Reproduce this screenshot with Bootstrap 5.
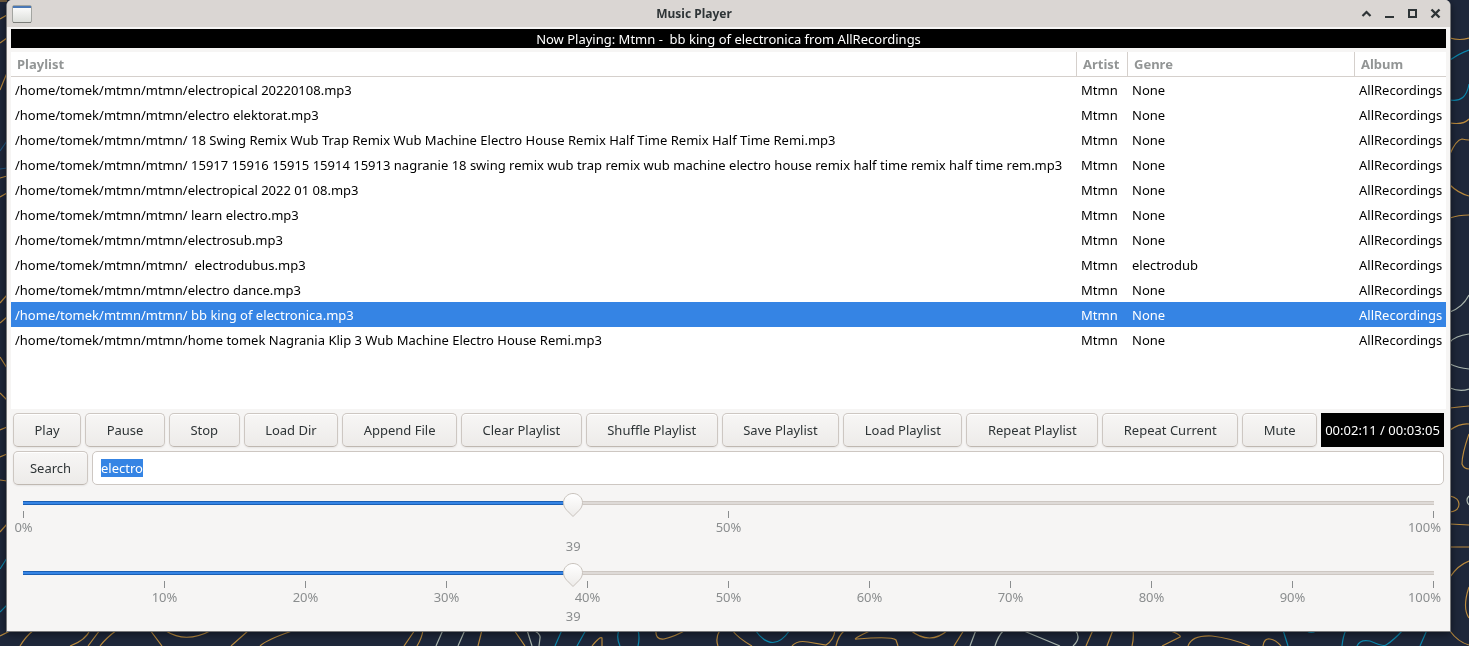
<!DOCTYPE html>
<html lang="en">
<head>
<meta charset="utf-8">
<meta name="viewport" content="width=device-width, initial-scale=1">
<title>Music Player</title>
<link href="https://cdn.jsdelivr.net/npm/bootstrap@5.3.0/dist/css/bootstrap.min.css" rel="stylesheet">
<style>
  body { background: #1e273a; font-family: "Noto Sans", sans-serif; font-size: 13px; line-height: 19px; color: #000; padding: 0 18px 14px 6px; }
  .wallpaper { position: fixed; top: 0; left: 0; z-index: -1; fill: none; stroke-width: 1.2; }
  .gold { stroke: #b98a3e; } .cyan { stroke: #0b87ad; } .mist { stroke: #a9b5ad; } .dusk { stroke: #1f5680; }
  .app-window { background: #f6f5f4; border: 1px solid #77787a; border-top: 0; border-radius: 6px 6px 0 0; box-shadow: 0 2px 8px rgba(0,0,0,.5); }
  .titlebar { background: #dad6d3; height: 27px; color: #2e3436; border-radius: 5px 5px 0 0; padding: 0 3px 0 4px; }
  .titlebar h1 { font-size: 12px; line-height: 19px; }
  .win-btn { width: 23px; height: 27px; border: 0; background: none; padding: 0; color: #2e3436; }
  .win-btn svg { display: block; margin: auto; }
  .client { padding: 2px 4px 6px; }
  .now-playing { background: #000; color: #fff; height: 19px; line-height: 21px; margin-bottom: 4px; white-space: pre; }
  .playlist { background: #fff; }
  .playlist table { color: #000; table-layout: fixed; border-collapse: separate; border-spacing: 0; }
  .playlist th { height: 25px; padding: 0 6px; color: #929595; border-bottom: 1px solid #d5d0cc; font-weight: 700; }
  .playlist th + th { border-left: 1px solid #d5d0cc; }
  .playlist td { height: 25px; padding: 2px 4px 0; white-space: pre; }
  .playlist td + td { padding-left: 5px; }
  .playlist tr.current { background: #3584e4; color: #fff; }
  .c-artist { width: 51px; } .c-genre { width: 227px; } .c-album { width: 92px; }
  .panel { padding: 4px 2px 0; }
  .gtk-btn { height: 34px; padding: 0 8px; font-size: 13px; line-height: 19px; color: #2e3436; white-space: nowrap;
    border: 1px solid #cdc7c2; border-bottom-color: #bfb8b1; border-radius: 5px;
    background: linear-gradient(#f7f6f5, #edebe9); box-shadow: inset 0 1px #fff, 0 1px 2px rgba(0,0,0,.07); }
  .gtk-btn:hover { background: #f9f9f8; border-color: #cdc7c2; }
  .tool { padding: 0 20px; }
  .clock { background: #000; color: #fff; height: 34px; line-height: 34px; width: 123px; text-align: center; white-space: nowrap; }
  .search-btn { width: 75px; }
  .search-box, .search-box:focus { height: 34px; padding: 0 8px; font-size: 13px; line-height: 19px; color: #000; background: #fff;
    border: 1px solid #cdc7c2; border-radius: 5px; box-shadow: none; caret-color: transparent; }
  .search-box::selection { background: #3584e4; color: #fff; }
  .scale { padding-top: 7px; color: #8b8e8f; line-height: 19px; }
  .scale input { display: block; width: 100%; height: 26px; margin: 0; background: none; appearance: none; -webkit-appearance: none; }
  .scale input::-webkit-slider-runnable-track { height: 26px; background:
      linear-gradient(#1b5fb4 1px, #3584e4 1px, #3584e4 3px, #1b5fb4 3px) 10px 9px / calc((100% - 20px) * var(--v)) 4px no-repeat,
      linear-gradient(#cdc7c2 1px, #dedad7 1px, #dedad7 3px, #cdc7c2 3px) 10px 9px / calc(100% - 20px) 4px no-repeat; }
  .scale input::-webkit-slider-thumb { -webkit-appearance: none; width: 20px; height: 26px; border: 0;
    background: url("data:image/svg+xml,%3Csvg xmlns='http://www.w3.org/2000/svg' width='20' height='26'%3E%3Cdefs%3E%3ClinearGradient id='g' x2='0' y2='1'%3E%3Cstop stop-color='%23fff'/%3E%3Cstop offset='1' stop-color='%23edebe9'/%3E%3C/linearGradient%3E%3C/defs%3E%3Cpath d='M10 1.5C15 1.5 19.500 5.500 19.500 10.500C19.500 14 18 16.500 16 18.500L10 24.500L4 18.500C2 16.500 .5 14 .5 10.500C.5 5.500 5 1.500 10 1.500Z' fill='url(%23g)' stroke='%23c8c2bc'/%3E%3C/svg%3E") no-repeat; }
  .ticks { margin: -7px 10px 0; pointer-events: none; }
  .tick { width: 1px; }
  .tick i { width: 1px; height: 7px; background: #8b8e8f; flex: none; }
  .tick span { height: 18px; line-height: 18px; }
  .tick.end { align-items: flex-end; }
  .tick.end span { margin-right: -7px; }
  .scale output { width: 0; height: 19px; line-height: 21px; margin-left: calc(10px + (100% - 20px) * var(--v)); }
</style>
</head>
<body class="min-vh-100 d-flex flex-column">

<svg class="wallpaper" width="1469" height="646" aria-hidden="true">
  <g class="gold">
    <path d="M0 1H7M0 19L7 15M0 43L7 38M0 90Q4 80 7 73M0 178L7 176M0 197L7 193M0 303L7 295M0 323L7 317M0 357L7 368M0 393L7 400M0 430L7 427M0 457L7 454M0 480L7 481M0 532L7 524M0 636L10 631"/>
    <path d="M20 646Q26 636 34 630M70 646Q86 640 90 630M88 646L100 630M100 646Q106 638 117 630M150 630L162 646M166 631Q186 644 212 630M231 646L249 630M260 646Q266 640 292 631M404 646L415 630M417 646Q422 638 423 630M478 646L482 630"/>
    <path d="M514 630L525 646M592 646Q600 636 602 638V646M656 630Q655 640 664 639Q676 636 686 630M720 630Q715 638 718 646M732 630Q738 638 752 646M792 646Q797 640 808 642Q820 644 826 645Q834 640 835 630M836 646Q838 636 845 630M872 630Q850 640 857 639Q892 636 896 640L898 646M910 630Q930 646 948 630M954 646L964 630"/>
    <path d="M1086 646L1093 630M1107 646L1113 630M1132 646Q1134 638 1133 630M1168 630Q1182 635 1180 637L1162 646M1188 646Q1192 635 1212 636Q1230 638 1250 646M1263 646Q1264 638 1270 639Q1276 640 1281 646"/>
    <path d="M1450 38Q1460 41 1469 38M1450 123Q1464 125 1469 119M1450 154Q1456 140 1462 139Q1466 140 1469 140M1450 185Q1458 193 1469 196M1450 218Q1458 215 1469 215M1450 408Q1458 407 1469 406M1450 430Q1460 423 1469 424M1469 434Q1462 454 1462 464Q1464 469 1469 469M1450 496Q1459 498 1459 504Q1459 511 1450 512M1450 524L1469 525M1450 547H1469M1450 577Q1458 565 1469 561M1469 587Q1462 608 1469 618M1450 631Q1458 642 1469 645"/>
  </g>
  <g class="cyan">
    <path d="M0 569L7 558M0 612L7 605M555 646L562 630M577 646L586 630M619 630Q616 638 620 646M638 630Q640 638 638 646M755 630Q773 655 790 630M1283 630L1288 646M1307 631Q1311 634 1316 631M1342 646Q1343 636 1346 630M1357 646Q1360 639 1370 641Q1384 647 1386 645Q1394 640 1403 630M1420 646L1427 630"/>
    <path d="M1450 60Q1460 53 1469 50M1450 100Q1466 103 1469 84"/>
  </g>
  <path class="mist" d="M436 646L443 630M458 646L465 630M527 630L532 646M533 630Q541 634 540 638L539 646M970 646L976 630M995 646Q998 636 1004 630M1024 631L1060 646M1075 630Q1082 638 1073 646M1450 312Q1463 307 1469 295M1450 342Q1455 336 1469 334M1450 364Q1458 368 1469 369M1450 388Q1460 392 1469 389M1469 496Q1465 500 1469 505"/>
  <path class="dusk" d="M0 151L7 141M0 169L7 168"/>
</svg>

<main class="app-window flex-grow-1 d-flex flex-column">
  <header class="titlebar d-flex align-items-center justify-content-between">
    <svg class="d-block" width="22" height="20" viewBox="0 0 22 20" aria-hidden="true">
      <defs><linearGradient id="pane" x2="0" y2="1"><stop stop-color="#fff"/><stop offset="1" stop-color="#dcdeda"/></linearGradient></defs>
      <rect x="1.500" y="1.500" width="19" height="17" rx="1.500" fill="url(#pane)" stroke="#a3a5a1"/>
      <path d="M2 3H20" stroke="#4a78b5" stroke-width="2"/>
      <path d="M2 18.500H20" stroke="#7b7d79"/>
    </svg>
    <h1 class="m-0 fw-bold">Music Player</h1>
    <div class="d-flex">
      <button class="win-btn" type="button" aria-label="Roll up"><svg width="11" height="11" fill="none" stroke="currentColor" stroke-width="2.200"><path d="M1.500 8L5.500 4L9.500 8"/></svg></button>
      <button class="win-btn" type="button" aria-label="Minimize"><svg width="11" height="11" fill="none" stroke="currentColor" stroke-width="2"><path d="M1 9H10"/></svg></button>
      <button class="win-btn" type="button" aria-label="Maximize"><svg width="11" height="11" fill="none" stroke="currentColor" stroke-width="2"><path d="M2 2H9V9H2Z"/></svg></button>
      <button class="win-btn" type="button" aria-label="Close"><svg width="11" height="11" fill="none" stroke="currentColor" stroke-width="2.400"><path d="M1.500 1.500L9.500 9.500M9.500 1.500L1.500 9.500"/></svg></button>
    </div>
  </header>

  <div class="client flex-grow-1 d-flex flex-column">
    <div class="now-playing text-center">Now Playing: Mtmn -  bb king of electronica from AllRecordings</div>

    <div class="playlist flex-grow-1">
      <table class="w-100">
        <colgroup><col><col class="c-artist"><col class="c-genre"><col class="c-album"></colgroup>
        <thead><tr><th>Playlist</th><th>Artist</th><th>Genre</th><th>Album</th></tr></thead>
        <tbody>
          <tr><td>/home/tomek/mtmn/mtmn/electropical 20220108.mp3</td><td>Mtmn</td><td>None</td><td>AllRecordings</td></tr>
          <tr><td>/home/tomek/mtmn/mtmn/electro elektorat.mp3</td><td>Mtmn</td><td>None</td><td>AllRecordings</td></tr>
          <tr><td>/home/tomek/mtmn/mtmn/ 18 Swing Remix Wub Trap Remix Wub Machine Electro House Remix Half Time Remix Half Time Remi.mp3</td><td>Mtmn</td><td>None</td><td>AllRecordings</td></tr>
          <tr><td>/home/tomek/mtmn/mtmn/ 15917 15916 15915 15914 15913 nagranie 18 swing remix wub trap remix wub machine electro house remix half time remix half time rem.mp3</td><td>Mtmn</td><td>None</td><td>AllRecordings</td></tr>
          <tr><td>/home/tomek/mtmn/mtmn/electropical 2022 01 08.mp3</td><td>Mtmn</td><td>None</td><td>AllRecordings</td></tr>
          <tr><td>/home/tomek/mtmn/mtmn/ learn electro.mp3</td><td>Mtmn</td><td>None</td><td>AllRecordings</td></tr>
          <tr><td>/home/tomek/mtmn/mtmn/electrosub.mp3</td><td>Mtmn</td><td>None</td><td>AllRecordings</td></tr>
          <tr><td>/home/tomek/mtmn/mtmn/  electrodubus.mp3</td><td>Mtmn</td><td>electrodub</td><td>AllRecordings</td></tr>
          <tr><td>/home/tomek/mtmn/mtmn/electro dance.mp3</td><td>Mtmn</td><td>None</td><td>AllRecordings</td></tr>
          <tr class="current"><td>/home/tomek/mtmn/mtmn/ bb king of electronica.mp3</td><td>Mtmn</td><td>None</td><td>AllRecordings</td></tr>
          <tr><td>/home/tomek/mtmn/mtmn/home tomek Nagrania Klip 3 Wub Machine Electro House Remi.mp3</td><td>Mtmn</td><td>None</td><td>AllRecordings</td></tr>
        </tbody>
      </table>
    </div>

    <div class="panel">
      <div class="d-flex gap-1 mb-1">
        <button class="btn gtk-btn tool flex-fill" type="button">Play</button>
        <button class="btn gtk-btn tool flex-fill" type="button">Pause</button>
        <button class="btn gtk-btn tool flex-fill" type="button">Stop</button>
        <button class="btn gtk-btn tool flex-fill" type="button">Load Dir</button>
        <button class="btn gtk-btn tool flex-fill" type="button">Append File</button>
        <button class="btn gtk-btn tool flex-fill" type="button">Clear Playlist</button>
        <button class="btn gtk-btn tool flex-fill" type="button">Shuffle Playlist</button>
        <button class="btn gtk-btn tool flex-fill" type="button">Save Playlist</button>
        <button class="btn gtk-btn tool flex-fill" type="button">Load Playlist</button>
        <button class="btn gtk-btn tool flex-fill" type="button">Repeat Playlist</button>
        <button class="btn gtk-btn tool flex-fill" type="button">Repeat Current</button>
        <button class="btn gtk-btn tool flex-fill" type="button">Mute</button>
        <div class="clock">00:02:11 / 00:03:05</div>
      </div>
      <form class="d-flex gap-1" onsubmit="return false">
        <button class="btn gtk-btn search-btn flex-shrink-0" type="submit">Search</button>
        <input class="form-control search-box" id="query" type="text" value="electro" aria-label="Search" autocomplete="off" spellcheck="false">
      </form>

      <div class="scale" style="--v:.39">
        <input type="range" id="position" min="0" max="100" value="39" aria-label="Position">
        <div class="ticks d-flex justify-content-between">
          <div class="tick d-flex flex-column align-items-center"><i></i><span>0%</span></div>
          <div class="tick d-flex flex-column align-items-center"><i></i><span>50%</span></div>
          <div class="tick end d-flex flex-column"><i></i><span>100%</span></div>
        </div>
        <output class="d-flex justify-content-center" for="position">39</output>
      </div>
      <div class="scale" style="--v:.39">
        <input type="range" id="volume" min="0" max="100" value="39" aria-label="Volume">
        <div class="ticks d-flex justify-content-between">
          <div class="tick"></div>
          <div class="tick d-flex flex-column align-items-center"><i></i><span>10%</span></div>
          <div class="tick d-flex flex-column align-items-center"><i></i><span>20%</span></div>
          <div class="tick d-flex flex-column align-items-center"><i></i><span>30%</span></div>
          <div class="tick d-flex flex-column align-items-center"><i></i><span>40%</span></div>
          <div class="tick d-flex flex-column align-items-center"><i></i><span>50%</span></div>
          <div class="tick d-flex flex-column align-items-center"><i></i><span>60%</span></div>
          <div class="tick d-flex flex-column align-items-center"><i></i><span>70%</span></div>
          <div class="tick d-flex flex-column align-items-center"><i></i><span>80%</span></div>
          <div class="tick d-flex flex-column align-items-center"><i></i><span>90%</span></div>
          <div class="tick end d-flex flex-column"><i></i><span>100%</span></div>
        </div>
        <output class="d-flex justify-content-center" for="volume">39</output>
      </div>
    </div>
  </div>
</main>

<script src="https://cdn.jsdelivr.net/npm/bootstrap@5.3.0/dist/js/bootstrap.bundle.min.js"></script>
<script>
  const query = document.getElementById('query');
  query.focus();
  query.select();
  document.querySelectorAll('.scale').forEach(scale => {
    const range = scale.querySelector('input');
    range.addEventListener('input', () => {
      scale.style.setProperty('--v', range.value / 100);
      scale.querySelector('output').value = range.value;
    });
  });
</script>
</body>
</html>
